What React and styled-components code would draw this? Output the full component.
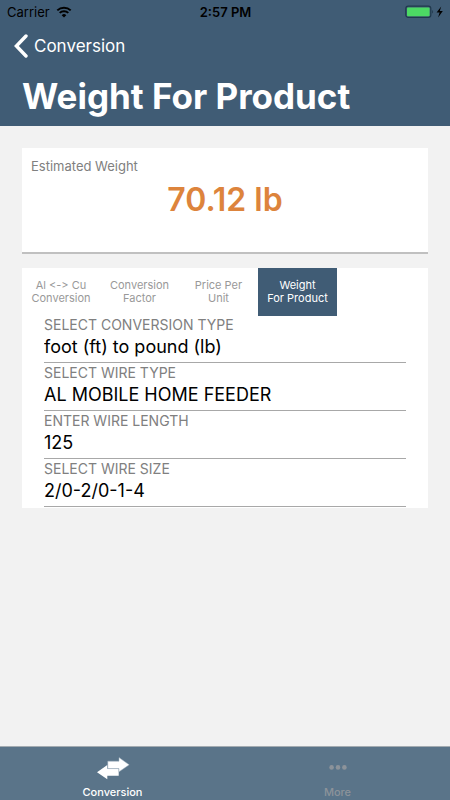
import React, { useState } from 'react';
import styled, { createGlobalStyle } from 'styled-components';

const tabs = [
  ['Al <-> Cu', 'Conversion'],
  ['Conversion', 'Factor'],
  ['Price Per', 'Unit'],
  ['Weight', 'For Product'],
];

const App = () => {
  const [active, setActive] = useState(3);
  const [length, setLength] = useState('125');

  return (
    <>
      <GlobalStyle />
      <Page>
        <Header>
          <StatusBar>
            <Carrier>
              Carrier
              <svg width="16" height="12" viewBox="0 0 16 12" aria-hidden="true">
                <path d="M8 11.6 5.7 9.2a3.3 3.3 0 0 1 4.6 0Z" fill="#000" />
                <path d="M3.7 6.9a6.1 6.1 0 0 1 8.6 0M1.3 4.4a9.6 9.6 0 0 1 13.4 0" fill="none" stroke="#000" strokeWidth="2" />
              </svg>
            </Carrier>
            <Clock>2:57 PM</Clock>
            <Power>
              <svg width="39" height="14" viewBox="0 0 39 14" aria-hidden="true">
                <rect x="0.8" y="1.2" width="25" height="11.2" rx="2.4" fill="none" stroke="#20394d" strokeWidth="1.2" />
                <rect x="2" y="2.4" width="22.6" height="8.8" rx="1" fill="#4cd964" />
                <path d="M27.2 5v3.6c1.2-.4 1.2-3.2 0-3.6Z" fill="#20394d" />
                <path d="M36.2 1.4 31.6 7.6h3l-1.5 4.9 4.7-6.5h-3Z" fill="#000" />
              </svg>
            </Power>
          </StatusBar>
          <Back href="#conversion">
            <svg width="14" height="24" viewBox="0 0 14 24" aria-hidden="true">
              <path d="M12 2 2.4 12 12 22" fill="none" stroke="#fff" strokeWidth="3.4" strokeLinecap="round" strokeLinejoin="miter" />
            </svg>
            Conversion
          </Back>
          <Title>Weight For Product</Title>
        </Header>

        <Main>
          <ResultCard>
            <ResultLabel htmlFor="weight">Estimated Weight</ResultLabel>
            <Result id="weight">70.12 lb</Result>
          </ResultCard>

          <FormCard>
            <Tabs>
              {tabs.map(([top, bottom], i) => (
                <Tab key={i} type="button" $active={i === active} onClick={() => setActive(i)}>
                  {top}<br />{bottom}
                </Tab>
              ))}
            </Tabs>
            <Fields>
              <Field>
                <Label htmlFor="type">SELECT CONVERSION TYPE</Label>
                <Select id="type"><option>foot (ft) to pound (lb)</option></Select>
              </Field>
              <Field>
                <Label htmlFor="wire">SELECT WIRE TYPE</Label>
                <Select id="wire"><option>AL MOBILE HOME FEEDER</option></Select>
              </Field>
              <Field>
                <Label htmlFor="length">ENTER WIRE LENGTH</Label>
                <Input id="length" inputMode="decimal" value={length} onChange={(e) => setLength(e.target.value)} />
              </Field>
              <Field>
                <Label htmlFor="size">SELECT WIRE SIZE</Label>
                <Select id="size"><option>2/0-2/0-1-4</option></Select>
              </Field>
            </Fields>
          </FormCard>
        </Main>

        <BottomBar>
          <BarLink href="#conversion" $active>
            <svg width="34" height="24" viewBox="0 0 34 24" aria-hidden="true">
              <path d="M1 15.2 11.3 8v3.7h11.4v7H11.3v3.6Z" fill="#fff" />
              <path d="M11.8 4.2h11.2V.6l10.2 7.2L23 14.8v-3.2H11.8Z" fill="#fff" stroke="#9fb0be" strokeWidth="0.5" />
            </svg>
            Conversion
          </BarLink>
          <BarLink href="#more">
            <svg width="34" height="24" viewBox="0 0 34 24" aria-hidden="true">
              <circle cx="10.6" cy="10.4" r="2.3" fill="#8c939a" />
              <circle cx="17" cy="10.4" r="2.3" fill="#8c939a" />
              <circle cx="23.4" cy="10.4" r="2.3" fill="#8c939a" />
            </svg>
            More
          </BarLink>
        </BottomBar>
      </Page>
    </>
  );
};

export default App;

const GlobalStyle = createGlobalStyle`
    * {
        box-sizing: border-box;
    }

    body {
        margin: 0;
        font-family: Inter, "Liberation Sans", sans-serif;
        background-color: #f2f2f2;
    }
`

const Page = styled.div`
    min-height: 100vh;
    display: flex;
    flex-direction: column;
`

const Header = styled.header`
    background-color: #405c75;
    color: white;
    padding-bottom: 6px;
`

const StatusBar = styled.div`
    height: 24px;
    padding: 0 6px 0 7px;
    display: grid;
    grid-template-columns: 1fr auto 1fr;
    align-items: center;
    color: black;
    font-size: 13px;
`

const Carrier = styled.div`
    display: flex;
    align-items: center;
    gap: 6px;
`

const Clock = styled.div`
    font-weight: 600;
`

const Power = styled.div`
    display: flex;
    justify-content: flex-end;
`

const Back = styled.a`
    height: 44px;
    padding-left: 14px;
    display: flex;
    align-items: center;
    gap: 6px;
    color: white;
    font-size: 17px;
    text-decoration: none;
`

const Title = styled.h1`
    margin: 0;
    padding: 4px 22px 0;
    font-size: 35px;
    line-height: 48px;
    font-weight: 700;
`

const Main = styled.main`
    flex: 1;
    padding: 22px;
    display: flex;
    flex-direction: column;
    gap: 16px;
`

const ResultCard = styled.section`
    padding: 8px 9px 28px;
    display: flex;
    flex-direction: column;
    background-color: white;
    box-shadow: 0 2px 0 #c0c0c0;
`

const ResultLabel = styled.label`
    color: #808080;
    font-size: 13px;
    line-height: 20px;
`

const Result = styled.output`
    color: #dd843c;
    font-size: 32px;
    line-height: 48px;
    font-weight: 600;
    text-align: center;
`

const FormCard = styled.form`
    background-color: white;
`

const Tabs = styled.div`
    display: grid;
    grid-template-columns: 78px 79px 79px 79px;
`

const Tab = styled.button`
    height: 48px;
    padding: 0;
    border: none;
    background-color: ${({ $active }) => ($active ? '#405c75' : 'transparent')};
    color: ${({ $active }) => ($active ? 'white' : '#999')};
    font-family: inherit;
    font-size: 11px;
    line-height: 13px;
    font-feature-settings: "calt" 0;
    cursor: pointer;
`

const Fields = styled.div`
    padding: 0 22px;
`

const Field = styled.div`
    margin-bottom: 1px;
    padding-bottom: 4px;
    display: flex;
    flex-direction: column;
    border-bottom: 1px solid #a8a8a8;
`

const Label = styled.label`
    color: #808080;
    font-size: 14px;
    line-height: 18px;
`

const Input = styled.input`
    width: 100%;
    height: 24px;
    padding: 0;
    border: none;
    outline: none;
    appearance: none;
    background: transparent;
    color: black;
    font-family: inherit;
    font-size: 18px;
`

const Select = styled(Input).attrs({ as: 'select' })``

const BottomBar = styled.nav`
    display: flex;
    background-color: #5a7489;
    border-top: 1px solid #a3abb1;
`

const BarLink = styled.a`
    flex: 1;
    padding: 10px 0 0;
    display: flex;
    flex-direction: column;
    align-items: center;
    gap: 3px;
    color: ${({ $active }) => ($active ? 'white' : '#8c939a')};
    font-size: 11px;
    line-height: 16px;
    font-weight: 500;
    text-decoration: none;
`
